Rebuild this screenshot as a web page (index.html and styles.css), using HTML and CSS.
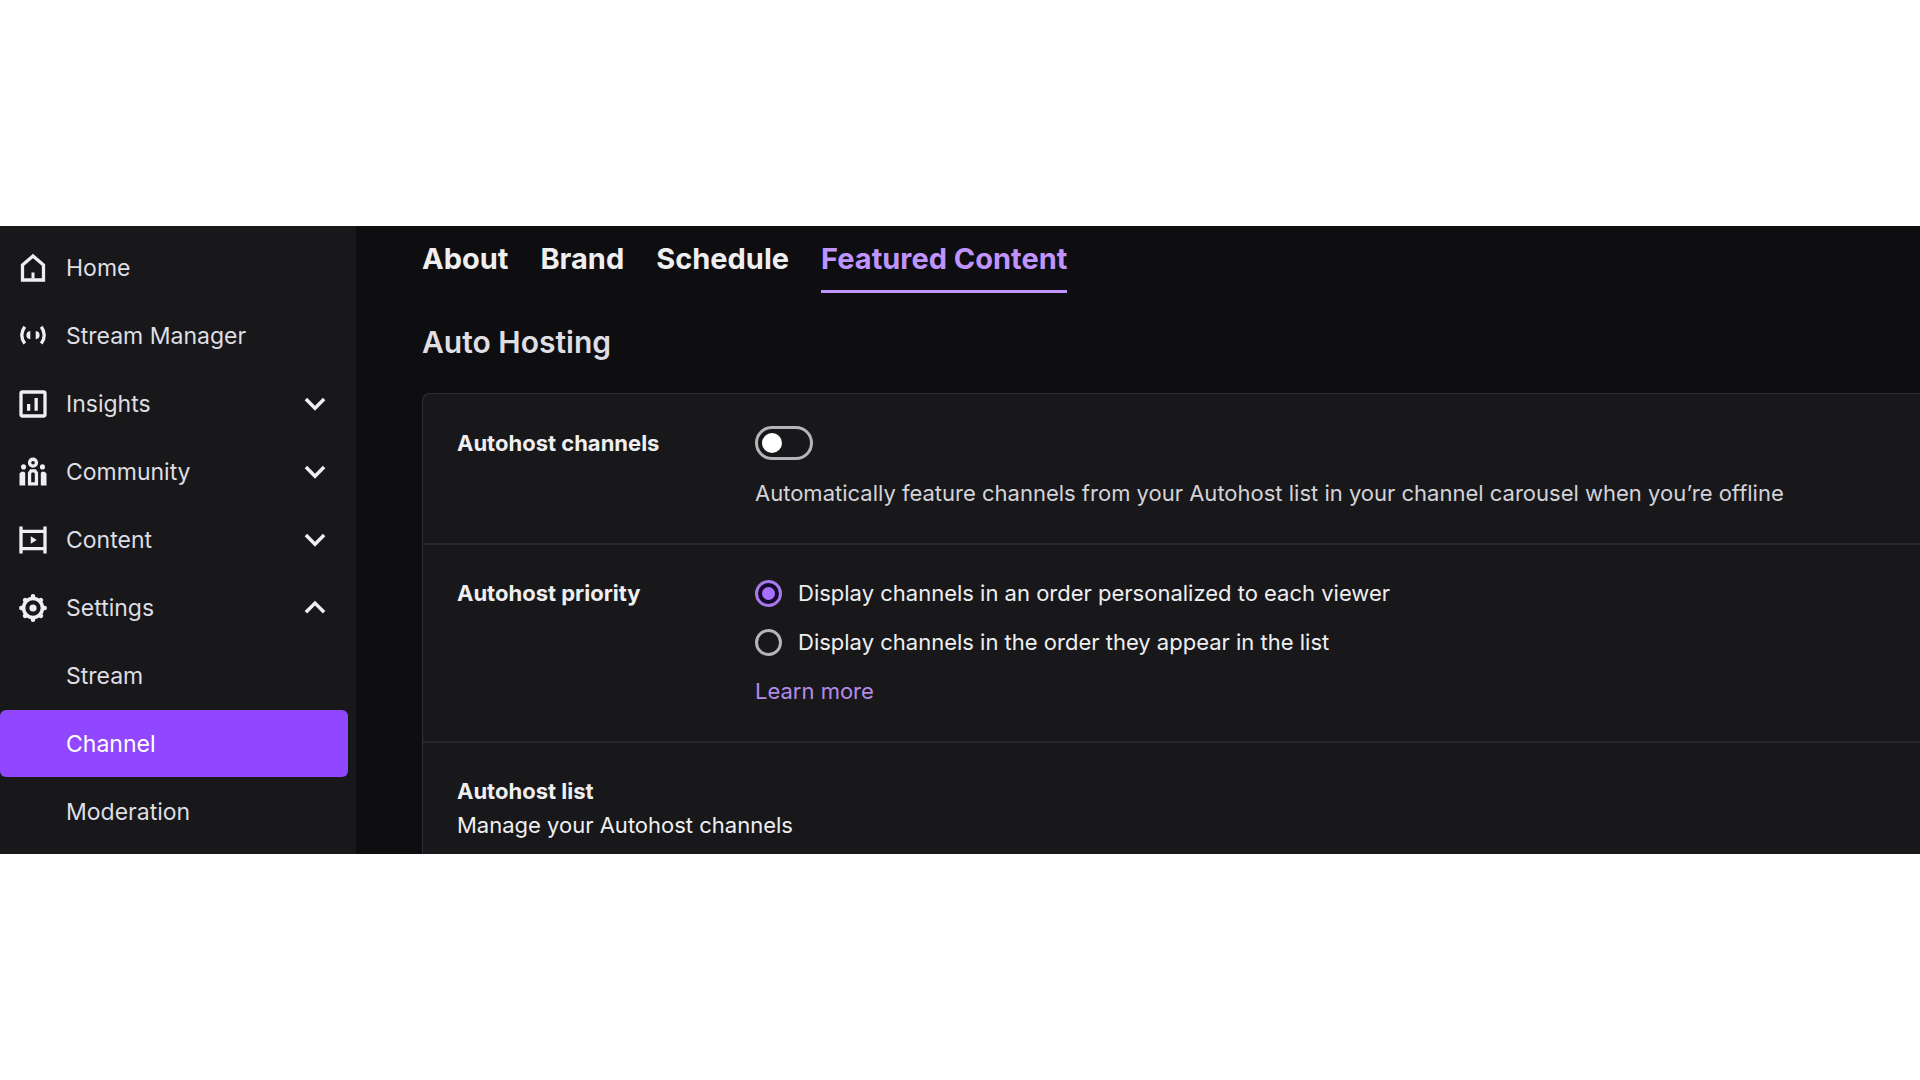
FILE: index.html
```html
<!DOCTYPE html>
<html lang="en">
<head>
<meta charset="utf-8">
<meta name="viewport" content="width=device-width, initial-scale=1">
<title>Channel settings</title>
<link rel="stylesheet" href="styles.css">
</head>
<body>
<div class="dashboard">
  <nav class="sidebar" aria-label="Dashboard">
    <a class="nav-item" href="#home">
      <svg class="icon" viewBox="0 0 20 20"><path d="M3 8 10 2l7 6v10H3z" fill="none" stroke="currentColor" stroke-width="2.200"/><path d="M9 13h2v4H9z" fill="currentColor"/></svg>
      <span>Home</span>
    </a>
    <a class="nav-item" href="#stream-manager">
      <svg class="icon" viewBox="0 0 20 20"><path d="M4.500 3.800q-4 5.600 0 11.200M15.500 3.800q4 5.600 0 11.200" fill="none" stroke="currentColor" stroke-width="2.200"/><path d="M8.200 6.600v5.600Q5.600 12 5.600 9.400T8.200 6.600zM11.800 6.600v5.600q2.600-.2 2.600-2.800T11.800 6.600z" fill="currentColor"/></svg>
      <span>Stream Manager</span>
    </a>
    <button class="nav-item" type="button" aria-expanded="false">
      <svg class="icon" viewBox="0 0 20 20"><rect x="2" y="2" width="16" height="16" rx="1" fill="none" stroke="currentColor" stroke-width="2.200"/><path d="M6 10h2.200v4.500H6zM11 6h2.200v8.500H11z" fill="currentColor"/></svg>
      <span>Insights</span>
      <svg class="chevron" viewBox="0 0 20 20"><path d="m3.500 6.500 6.500 6.500 6.500-6.500" fill="none" stroke="currentColor" stroke-width="2.500"/></svg>
    </button>
    <button class="nav-item" type="button" aria-expanded="false">
      <svg class="icon" viewBox="0 0 20 20"><circle cx="10" cy="3.800" r="2.300" fill="none" stroke="currentColor" stroke-width="2.200"/><circle cx="3.700" cy="6.600" r="1.700" fill="currentColor"/><circle cx="16.300" cy="6.600" r="1.700" fill="currentColor"/><path d="M7.700 17.900v-7.200L8.700 9.300h2.600l1 1.400v7.200z" fill="none" stroke="currentColor" stroke-width="2.200"/><path d="M1 19v-8l1.200-1.200h2l.6.900V19zM19 19v-8l-1.200-1.200h-2l-.6.900V19z" fill="currentColor"/></svg>
      <span>Community</span>
      <svg class="chevron" viewBox="0 0 20 20"><path d="m3.500 6.500 6.500 6.500 6.500-6.500" fill="none" stroke="currentColor" stroke-width="2.500"/></svg>
    </button>
    <button class="nav-item" type="button" aria-expanded="false">
      <svg class="icon" viewBox="0 0 20 20"><path d="M2 1v18M18 1v18M2 4.200h16M2 15.800h16" fill="none" stroke="currentColor" stroke-width="2.200"/><path d="M8.500 7.500v5l4-2.500z" fill="currentColor"/></svg>
      <span>Content</span>
      <svg class="chevron" viewBox="0 0 20 20"><path d="m3.500 6.500 6.500 6.500 6.500-6.500" fill="none" stroke="currentColor" stroke-width="2.500"/></svg>
    </button>
    <button class="nav-item" type="button" aria-expanded="true">
      <svg class="icon" viewBox="0 0 20 20"><path d="M10 2.200v15.600M2.200 10h15.600M4.700 4.700l10.600 10.600M15.300 4.700 4.700 15.300" stroke="currentColor" stroke-width="3" stroke-linecap="round"/><circle cx="10" cy="10" r="6.300" fill="#18181b" stroke="currentColor" stroke-width="2.400"/><circle cx="10" cy="10" r="2.400" fill="currentColor"/></svg>
      <span>Settings</span>
      <svg class="chevron" viewBox="0 0 20 20"><path d="m3.500 13 6.500-6.500 6.500 6.500" fill="none" stroke="currentColor" stroke-width="2.500"/></svg>
    </button>
    <a class="nav-item nav-child" href="#stream">Stream</a>
    <a class="nav-item nav-child is-active" href="#channel" aria-current="page">Channel</a>
    <a class="nav-item nav-child" href="#moderation">Moderation</a>
  </nav>

  <main class="content">
    <nav class="tabs" aria-label="Channel settings">
      <a class="tab" href="#about">About</a>
      <a class="tab" href="#brand">Brand</a>
      <a class="tab" href="#schedule">Schedule</a>
      <a class="tab is-current" href="#featured" aria-current="page">Featured Content</a>
    </nav>
    <h1 class="title">Auto Hosting</h1>
    <div class="card">
      <section class="setting">
        <label class="setting-name" for="autohost">Autohost channels</label>
        <div class="setting-field">
          <input class="toggle" type="checkbox" role="switch" id="autohost">
          <p class="hint">Automatically feature channels from your Autohost list in your channel carousel when you’re offline</p>
        </div>
      </section>
      <section class="setting">
        <h2 class="setting-name" id="priority">Autohost priority</h2>
        <div class="setting-field options" role="radiogroup" aria-labelledby="priority">
          <label class="option"><input class="radio" type="radio" name="priority" checked>Display channels in an order personalized to each viewer</label>
          <label class="option"><input class="radio" type="radio" name="priority">Display channels in the order they appear in the list</label>
          <a class="more" href="#learn-more">Learn more</a>
        </div>
      </section>
      <section class="setting setting-list">
        <h2 class="setting-name">Autohost list</h2>
        <p class="setting-text">Manage your Autohost channels</p>
      </section>
    </div>
  </main>
</div>
</body>
</html>
```
FILE: styles.css
```css
* {
  box-sizing: border-box;
}

body {
  margin: 0;
  min-height: 100vh;
  display: flex;
  flex-direction: column;
  justify-content: center;
  background: #fff;
  color: #efeff1;
  font-family: Inter, "Liberation Sans", sans-serif;
  font-size: 22px;
}

h1, h2, p {
  margin: 0;
}

.dashboard {
  display: grid;
  grid-template-columns: 356px minmax(0, 1fr);
  background: #0e0e10;
}

.sidebar {
  display: flex;
  flex-direction: column;
  gap: 1px;
  padding: 8px 8px 9px 0;
  background: #18181b;
}

.nav-item {
  display: flex;
  align-items: center;
  gap: 16px;
  height: 67px;
  padding: 0 16px;
  border: 0;
  border-radius: 6px;
  background: none;
  color: #dedee3;
  font: inherit;
  font-size: 23px;
  text-align: left;
  text-decoration: none;
}

.nav-child {
  padding-left: 66px;
}

.nav-item.is-active {
  background: #9147ff;
  color: #fff;
}

.icon {
  width: 34px;
  height: 30px;
  color: #efeff1;
}

.chevron {
  width: 28px;
  height: 28px;
  margin-left: auto;
  margin-right: 3px;
  color: #efeff1;
}

.content {
  display: flex;
  flex-direction: column;
  padding: 13px 0 0 66px;
  overflow: hidden;
}

.tabs {
  display: flex;
  gap: 32px;
}

.tab {
  padding-bottom: 11px;
  border-bottom: 3px solid transparent;
  color: #efeff1;
  font-size: 29px;
  font-weight: 700;
  line-height: 40px;
  text-decoration: none;
}

.tab.is-current {
  border-color: #bf94ff;
  color: #bf94ff;
}

.title {
  padding: 29px 0 31px;
  color: #dedee3;
  font-size: 30px;
  font-weight: 600;
  line-height: 40px;
}

.card {
  flex: 1;
  padding-top: 1px;
  border: 1px solid #2f2f35;
  border-width: 1px 0 0 1px;
  border-radius: 8px 0 0 0;
  background: #18181b;
}

.setting {
  display: grid;
  grid-template-columns: 298px minmax(0, 1fr);
  padding: 31px 34px 33px;
  line-height: 34px;
}

.setting + .setting {
  border-top: 2px solid #26262b;
}

.setting-name {
  font-size: 22px;
  font-weight: 700;
}

.toggle {
  appearance: none;
  display: block;
  width: 58px;
  height: 34px;
  margin: 0;
  padding: 4px;
  border: 3px solid #b5b5b8;
  border-radius: 17px;
}

.toggle::before {
  content: "";
  display: block;
  width: 20px;
  height: 20px;
  border-radius: 50%;
  background: #fff;
}

.hint {
  padding-top: 16px;
  color: #d3d3d9;
}

.options {
  display: grid;
  gap: 15px;
}

.option {
  display: flex;
  align-items: center;
  gap: 16px;
}

.radio {
  appearance: none;
  display: grid;
  place-items: center;
  width: 27px;
  height: 27px;
  margin: 0;
  border: 3px solid #b5b5b8;
  border-radius: 50%;
}

.radio:checked {
  border-color: #a67aeb;
  background: #160a2c;
}

.radio:checked::before {
  content: "";
  width: 13px;
  height: 13px;
  border-radius: 50%;
  background: #a970ff;
}

.more {
  justify-self: start;
  color: #b48be8;
  text-decoration: none;
}

.setting-list {
  display: block;
  padding-bottom: 10px;
}
```
